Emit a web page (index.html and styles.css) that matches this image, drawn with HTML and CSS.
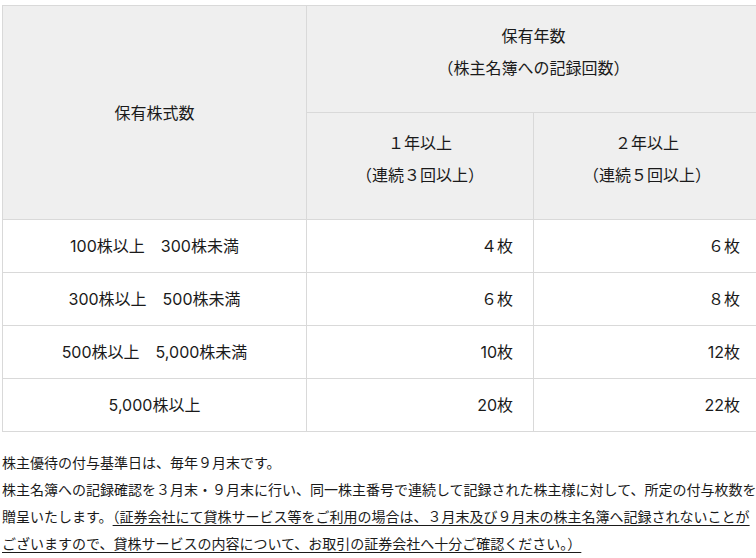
FILE: index.html
```html
<!DOCTYPE html>
<html lang="ja">
<head>
<meta charset="utf-8">
<title>株主優待</title>
<link rel="stylesheet" href="styles.css">
</head>
<body>
<div class="page">
  <table class="yutai">
    <colgroup>
      <col class="c1">
      <col class="c2">
      <col class="c3">
    </colgroup>
    <thead>
      <tr>
        <th rowspan="2" class="th-side">保有株式数</th>
        <th colspan="2" class="th-top">保有年数<br>（株主名簿への記録回数）</th>
      </tr>
      <tr>
        <th class="th-top">１年以上<br>（連続３回以上）</th>
        <th class="th-top">２年以上<br>（連続５回以上）</th>
      </tr>
    </thead>
    <tbody>
      <tr>
        <td class="range">100株以上　300株未満</td>
        <td class="num">４枚</td>
        <td class="num">６枚</td>
      </tr>
      <tr>
        <td class="range">300株以上　500株未満</td>
        <td class="num">６枚</td>
        <td class="num">８枚</td>
      </tr>
      <tr>
        <td class="range">500株以上　5,000株未満</td>
        <td class="num">10枚</td>
        <td class="num">12枚</td>
      </tr>
      <tr>
        <td class="range">5,000株以上</td>
        <td class="num">20枚</td>
        <td class="num">22枚</td>
      </tr>
    </tbody>
  </table>
  <div class="notes">
    <p>株主優待の付与基準日は、毎年９月末です。</p>
    <p>株主名簿への記録確認を３月末・９月末に行い、同一株主番号で連続して記録された株主様に対して、所定の付与枚数を贈呈いたします。<span class="ul">（証券会社にて貸株サービス等をご利用の場合は、３月末及び９月末の株主名簿へ記録されないことが</span><span class="ul">ございますので、貸株サービスの内容について、お取引の証券会社へ十分ご確認ください。）</span></p>
  </div>
</div>
</body>
</html>
```

FILE: styles.css
```css
html, body {
  margin: 0;
  padding: 0;
  overflow: hidden;
  background: #ffffff;
}

body {
  font-family: "Inter", "Noto Sans CJK JP", "Noto Sans", sans-serif;
  color: #1a1a1a;
}

.page {
  width: 758px;
  padding: 5px 0 0 2px;
}

.yutai {
  width: 758px;
  table-layout: fixed;
  border-collapse: collapse;
  font-size: 16px;
  line-height: 32px;
}

.c1 { width: 304px; }
.c2 { width: 227px; }
.c3 { width: 227px; }

.yutai th,
.yutai td {
  border: 1px solid #d9d9d9;
}

.yutai th {
  background: #efefef;
  font-weight: normal;
  text-align: center;
  vertical-align: middle;
}

.th-side {
  padding: 0;
}

.th-top {
  padding: 14px 10px 28px;
}

.yutai td {
  padding: 10px 20px;
  background: #ffffff;
}

.range {
  text-align: center;
}

.num {
  text-align: right;
}

.notes {
  margin-top: 17px;
  font-size: 14px;
  line-height: 27px;
}

.notes p {
  margin: 0;
}

.ul {
  text-decoration: underline;
  text-underline-offset: 3px;
}
```
